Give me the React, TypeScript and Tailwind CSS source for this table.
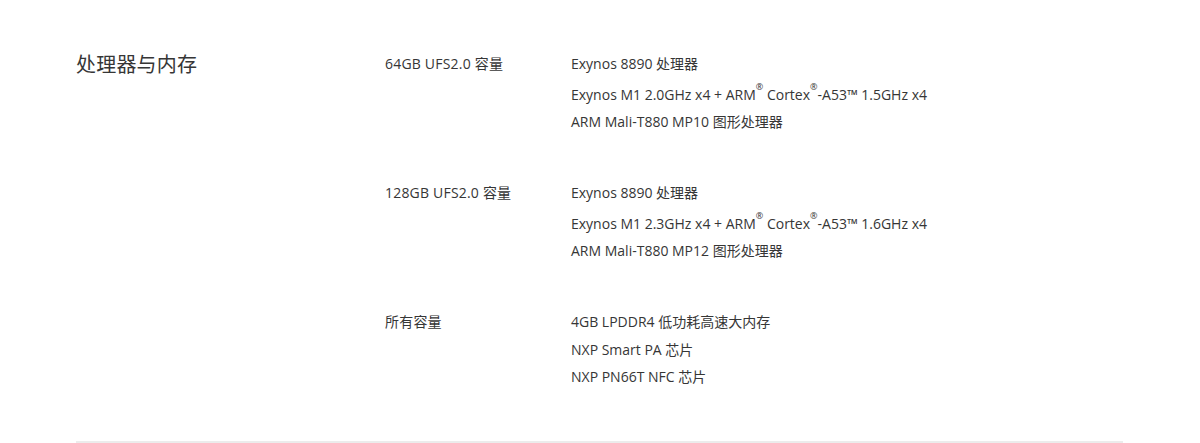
import React from "react";

type Row = { label: string; lines: React.ReactNode[] };

const Sup = ({ children }: { children: React.ReactNode }) => (
  <sup className="text-[9px] align-[6px] leading-none">{children}</sup>
);

const rows: Row[] = [
  {
    label: "64GB UFS2.0 容量",
    lines: [
      "Exynos 8890 处理器",
      <>
        Exynos M1 2.0GHz x4 + ARM<Sup>®</Sup> Cortex<Sup>®</Sup>-A53™ 1.5GHz x4
      </>,
      "ARM Mali-T880 MP10 图形处理器",
    ],
  },
  {
    label: "128GB UFS2.0 容量",
    lines: [
      "Exynos 8890 处理器",
      <>
        Exynos M1 2.3GHz x4 + ARM<Sup>®</Sup> Cortex<Sup>®</Sup>-A53™ 1.6GHz x4
      </>,
      "ARM Mali-T880 MP12 图形处理器",
    ],
  },
  {
    label: "所有容量",
    lines: ["4GB LPDDR4 低功耗高速大内存", "NXP Smart PA 芯片", "NXP PN66T NFC 芯片"],
  },
];

export default function App() {
  return (
    <div
      className="w-[1200px] h-[443px] bg-white text-[#363636] overflow-hidden"
      style={{ fontFamily: '"Open Sans", "Noto Sans CJK SC", sans-serif' }}
    >
      <div className="ml-[76px] w-[1047px] pt-[50px] pb-[50px] border-b-2 border-[#ececec] flex">
        <div className="w-[309px] shrink-0 text-[20px] leading-[28px] pt-[1px] tracking-[0.2px]">处理器与内存</div>
        <div className="flex flex-col gap-[44px]">
          {rows.map((r, i) => (
            <div key={i} className={`flex text-[14px] ${i === 2 ? "leading-[27.5px]" : "leading-[27px]"}`}>
              <div className="w-[186px] shrink-0 tracking-[0.2px]">{r.label}</div>
              <div className="flex flex-col">
                {r.lines.map((l, j) => (
                  <div key={j} className={j === 1 && i < 2 ? "mt-[4px]" : ""}>
                    {l}
                  </div>
                ))}
              </div>
            </div>
          ))}
        </div>
      </div>
    </div>
  );
}
